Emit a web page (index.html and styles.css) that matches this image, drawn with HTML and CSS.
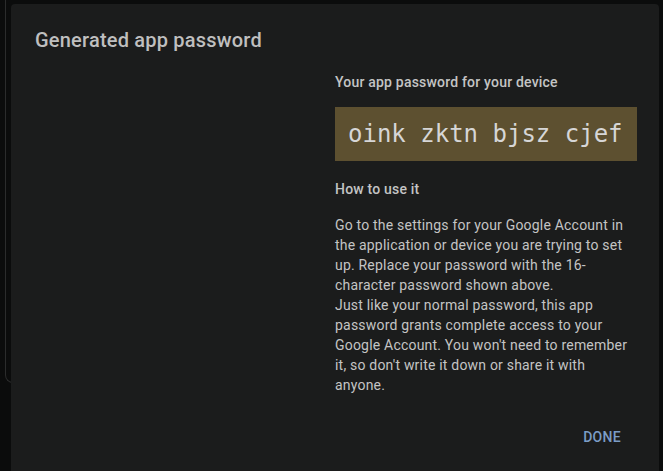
FILE: index.html
```html
<!DOCTYPE html>
<html lang="en">
<head>
<meta charset="utf-8">
<title>Generated app password</title>
<link rel="stylesheet" href="styles.css">
</head>
<body>
<div class="page-card"></div>
<div class="dialog" role="dialog">
  <h2 class="title">Generated app password</h2>
  <div class="content">
    <div class="aside"></div>
    <div class="main">
      <div class="label">Your app password for your device</div>
      <div class="password">oink zktn bjsz cjef</div>
      <div class="subhead">How to use it</div>
      <p class="text">Go to the settings for your Google Account in the application or device you are trying to set up. Replace your password with the 16-character password shown above.<br>Just like your normal password, this app password grants complete access to your Google Account. You won't need to remember it, so don't write it down or share it with anyone.</p>
      <div class="actions"><button class="done">Done</button></div>
    </div>
  </div>
</div>
</body>
</html>
```
FILE: styles.css
```css
html, body {
  margin: 0;
  padding: 0;
  height: 100%;
  overflow: hidden;
}
body {
  background: #0b0c0c;
  font-family: Roboto, "Liberation Sans", sans-serif;
}
.page-card {
  margin-left: 5px;
  width: 40px;
  height: 383px;
  border-left: 1px solid #2b2c2c;
  border-bottom: 1px solid #2b2c2c;
  border-bottom-left-radius: 8px;
  box-sizing: border-box;
}
.dialog {
  position: fixed;
  left: 11px;
  top: 4px;
  width: 648px;
  height: 520px;
  background: #1b1c1c;
  border-radius: 4px;
  box-sizing: border-box;
  padding: 24px 22px 0 24px;
  color: #c4c4c4;
}
.title {
  margin: 0;
  font-size: 20px;
  line-height: 24px;
  font-weight: 500;
  color: #bfbfbf;
  letter-spacing: 0.2px;
}
.content {
  display: grid;
  grid-template-columns: 1fr 302px;
  margin-top: 20px;
}
.label {
  font-size: 14px;
  line-height: 20px;
  font-weight: 500;
  letter-spacing: 0.2px;
  color: #c4c4c4;
}
.password {
  margin-top: 15px;
  background: #5d5030;
  color: #d6d6d6;
  font-family: "DejaVu Sans Mono", "Liberation Mono", monospace;
  font-size: 24px;
  line-height: 30px;
  padding: 12px 13px;
  white-space: nowrap;
}
.subhead {
  margin-top: 18px;
  font-size: 14px;
  line-height: 20px;
  font-weight: 500;
  letter-spacing: 0.2px;
  color: #c4c4c4;
}
.text {
  margin: 16px 0 0;
  font-size: 14px;
  line-height: 20px;
  letter-spacing: 0.2px;
  color: #c4c4c4;
}
.actions {
  display: flex;
  justify-content: flex-end;
  margin-top: 24px;
}
.done {
  background: none;
  border: none;
  font-family: Roboto, "Liberation Sans", sans-serif;
  font-size: 14px;
  font-weight: 500;
  text-transform: uppercase;
  letter-spacing: 0.3px;
  color: #7b9dc6;
  padding: 0 16px;
  height: 36px;
  line-height: 36px;
}
```
